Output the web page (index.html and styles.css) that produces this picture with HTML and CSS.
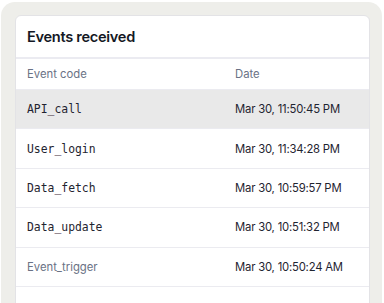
FILE: index.html
```html
<!DOCTYPE html>
<html lang="en">
<head>
<meta charset="utf-8">
<title>Events received</title>
<link rel="stylesheet" href="styles.css">
</head>
<body>
<div class="frame">
  <section class="card">
    <h2 class="title">Events received</h2>
    <div class="table">
      <div class="row head">
        <div class="c1">Event code</div>
        <div class="c2">Date</div>
      </div>
      <div class="row active">
        <div class="c1 code">API_call</div>
        <div class="c2">Mar 30, 11:50:45 PM</div>
      </div>
      <div class="row">
        <div class="c1 code">User_login</div>
        <div class="c2">Mar 30, 11:34:28 PM</div>
      </div>
      <div class="row">
        <div class="c1 code">Data_fetch</div>
        <div class="c2">Mar 30, 10:59:57 PM</div>
      </div>
      <div class="row">
        <div class="c1 code">Data_update</div>
        <div class="c2">Mar 30, 10:51:32 PM</div>
      </div>
      <div class="row">
        <div class="c1 muted">Event_trigger</div>
        <div class="c2">Mar 30, 10:50:24 AM</div>
      </div>
    </div>
  </section>
</div>
</body>
</html>
```
FILE: styles.css
```css
html, body {
  margin: 0;
  padding: 0;
  background: #ffffff;
  overflow: hidden;
  height: 303px;
}
body {
  font-family: Inter, "Liberation Sans", sans-serif;
  color: #1f2430;
}
.frame {
  margin: 2px 2px 0 1px;
  padding: 13px 12px 0 14px;
  background: #eeeeea;
  border-radius: 14px 14px 0 0;
  height: 320px;
}
.card {
  background: #ffffff;
  border: 1px solid #e3e3e6;
  border-radius: 6px;
  overflow: hidden;
  height: 320px;
}
.title {
  margin: 0;
  height: 43px;
  box-sizing: border-box;
  padding: 12px 11px 0;
  font-size: 14.6px;
  font-weight: 600;
  color: #141824;
  letter-spacing: -0.3px;
  border-bottom: 2px solid #ebebf1;
}
.row {
  display: flex;
  align-items: center;
  height: 39.4px;
  box-sizing: border-box;
  border-bottom: 1px solid #ebebf0;
  padding: 0 11px;
  font-size: 11.3px;
  white-space: nowrap;
}
.row.head {
  height: 31px;
  color: #6a7285;
}
.row.active {
  background: #e9e9e9;
}
.c1 {
  width: 208px;
  flex: none;
}
.c2 {
  flex: 1;
  letter-spacing: -0.2px;
}
.head .c2 {
  letter-spacing: 0;
}
.code {
  font-family: "DejaVu Sans Mono", "Liberation Mono", monospace;
  font-size: 11.4px;
  color: #1f2430;
}
.muted {
  color: #6a7285;
}
```
